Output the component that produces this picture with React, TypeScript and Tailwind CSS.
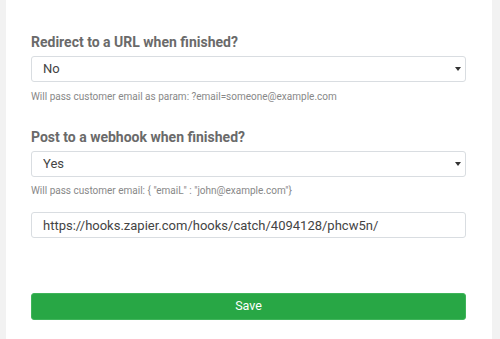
import { ChangeEvent, useState } from "react";

function Select({ value, options, onChange }: { value: string; options: string[]; onChange: (v: string) => void }) {
  return (
    <div className="relative">
      <select
        value={value}
        onChange={(e: ChangeEvent<HTMLSelectElement>) => onChange(e.target.value)}
        className="block h-[26px] w-full appearance-none rounded-[3px] border border-[#d9dde1] bg-white pl-[11px] text-[13px] text-[#444] outline-none"
      >
        {options.map((o) => (
          <option key={o}>{o}</option>
        ))}
      </select>
      <span className="pointer-events-none absolute right-[5px] top-[11px] h-0 w-0 border-x-[3px] border-t-[4px] border-x-transparent border-t-[#333]" />
    </div>
  );
}

export default function App() {
  const [redirect, setRedirect] = useState("No");
  const [webhook, setWebhook] = useState("Yes");
  const [url, setUrl] = useState("https://hooks.zapier.com/hooks/catch/4094128/phcw5n/");

  return (
    <div className="flex h-[339px] w-[500px] bg-[#f2f2f2] font-['Roboto',sans-serif]">
      <div className="ml-[6px] h-full w-[486px] bg-white pl-[25px] pr-[26px] pt-[32px]">
        <h2 className="text-[14px] font-bold leading-[20px] text-[#6a6a6a]">Redirect to a URL when finished?</h2>
        <div className="mt-[4px]">
          <Select value={redirect} options={["No", "Yes"]} onChange={setRedirect} />
        </div>
        <p className="mt-[8px] text-[10px] leading-[14px] text-[#888]">
          Will pass customer email as param: ?email=someone@example.com
        </p>

        <h2 className="mt-[23px] text-[14px] font-bold leading-[20px] text-[#6a6a6a]">Post to a webhook when finished?</h2>
        <div className="mt-[4px]">
          <Select value={webhook} options={["Yes", "No"]} onChange={setWebhook} />
        </div>
        <p className="mt-[7px] text-[10px] leading-[14px] text-[#888]">
          Will pass customer email: {'{ "emaiL" : "john@example.com"}'}
        </p>

        <input
          value={url}
          onChange={(e) => setUrl(e.target.value)}
          className="mt-[14px] block h-[26px] w-full rounded-[3px] border border-[#d9dde1] px-[11px] text-[13px] text-[#444] outline-none"
        />

        <button className="mt-[55px] block h-[27px] w-full rounded-[3px] border border-[#3fb45a] bg-[#28a745] text-[12.5px] text-white">
          Save
        </button>
      </div>
    </div>
  );
}
